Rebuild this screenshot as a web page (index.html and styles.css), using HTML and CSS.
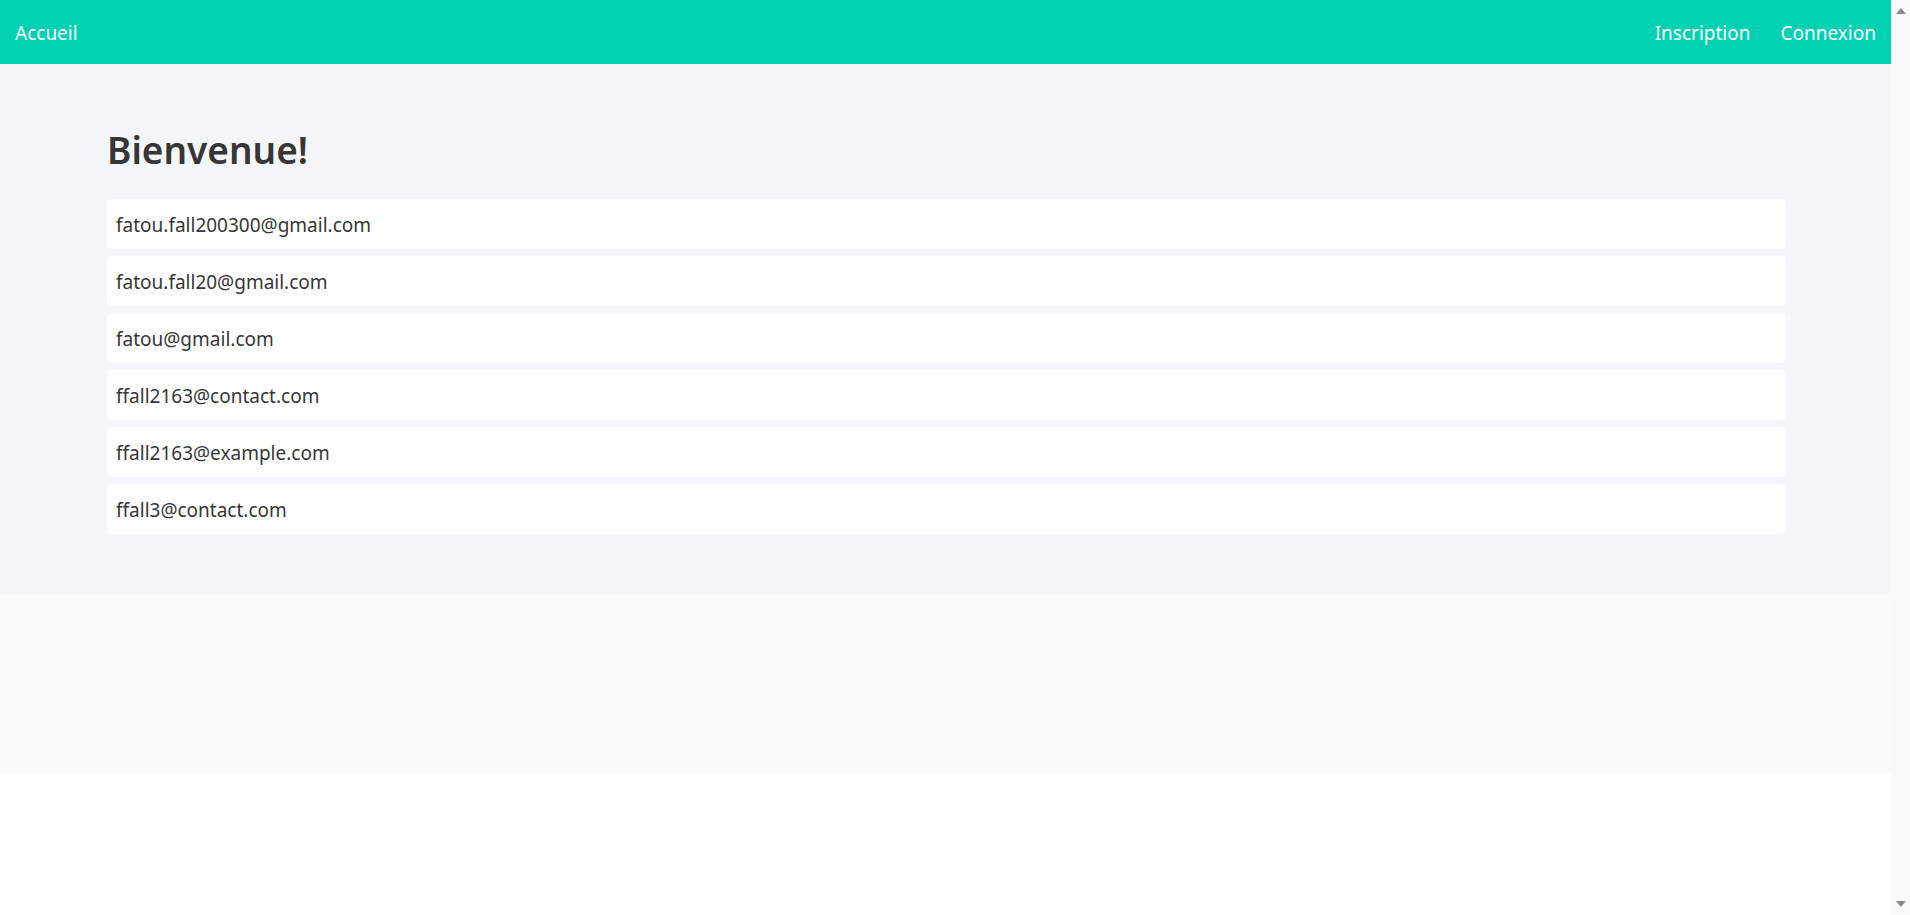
FILE: index.html
```html
<!DOCTYPE html>
<html lang="fr">
  <head>
    <meta charset="UTF-8" />
    <meta name="viewport" content="width=device-width, initial-scale=1.0" />
    <title>Accueil</title>
    <link rel="stylesheet" href="styles.css">
  </head>
  <body>
    <div class="page">
      <nav class="navbar">
        <div class="navbar-start">
          <a class="navbar-item" href="#">Accueil</a>
        </div>
        <div class="navbar-end">
          <a class="navbar-item" href="#">Inscription</a>
          <a class="navbar-item" href="#">Connexion</a>
        </div>
      </nav>

      <section class="section">
        <h1 class="title">Bienvenue!</h1>
        <div class="users">
          <div class="user-box">fatou.fall200300@gmail.com</div>
          <div class="user-box">fatou.fall20@gmail.com</div>
          <div class="user-box">fatou@gmail.com</div>
          <div class="user-box">ffall2163@contact.com</div>
          <div class="user-box">ffall2163@example.com</div>
          <div class="user-box">ffall3@contact.com</div>
        </div>
      </section>

      <footer class="footer"></footer>
    </div>

    <!-- window scrollbar -->
    <div class="scrollbar">
      <span class="arrow up"></span>
      <span class="arrow down"></span>
    </div>
  </body>
</html>
```

FILE: styles.css
```css
body {
  margin: 0;
  height: 100vh;
  overflow: hidden;
  display: flex;
  font-family: "Noto Sans", "Open Sans", sans-serif;
  color: #363636;
  background-color: #fff;
}

.page {
  flex: 1;
  min-width: 0;
}

/* Top bar */
.navbar {
  display: flex;
  justify-content: space-between;
  align-items: stretch;
  height: 64px;
  background-color: #00d1b2;
}

.navbar-start,
.navbar-end {
  display: flex;
  align-items: stretch;
}

.navbar-item {
  display: flex;
  align-items: center;
  padding: 2px 15px 0 15px;
  color: #fff;
  text-decoration: none;
  font-size: 19px;
}

/* Main section */
.section {
  background-color: #f5f6fa;
  padding: 60px 105px 60px 107px;
}

.title {
  margin: 3px 0 27px 0;
  font-size: 37px;
  font-weight: 600;
  line-height: 45px;
  color: #363636;
}

.users {
  display: flex;
  flex-direction: column;
  gap: 7px;
}

.user-box {
  background-color: #fff;
  border-radius: 5px;
  padding: 11px 9px 9px 9px;
  font-size: 19px;
  line-height: 30px;
}

/* Empty footer */
.footer {
  background-color: #fafafa;
  height: 180px;
}

/* Scrollbar strip */
.scrollbar {
  width: 19px;
  background-color: #f9f9f9;
  display: flex;
  flex-direction: column;
  justify-content: space-between;
  align-items: center;
  padding: 8px 0;
}

.arrow {
  width: 0;
  height: 0;
  border-left: 5px solid transparent;
  border-right: 5px solid transparent;
}

.arrow.up {
  border-bottom: 6px solid #8a8a8a;
}

.arrow.down {
  border-top: 6px solid #8a8a8a;
}
```
